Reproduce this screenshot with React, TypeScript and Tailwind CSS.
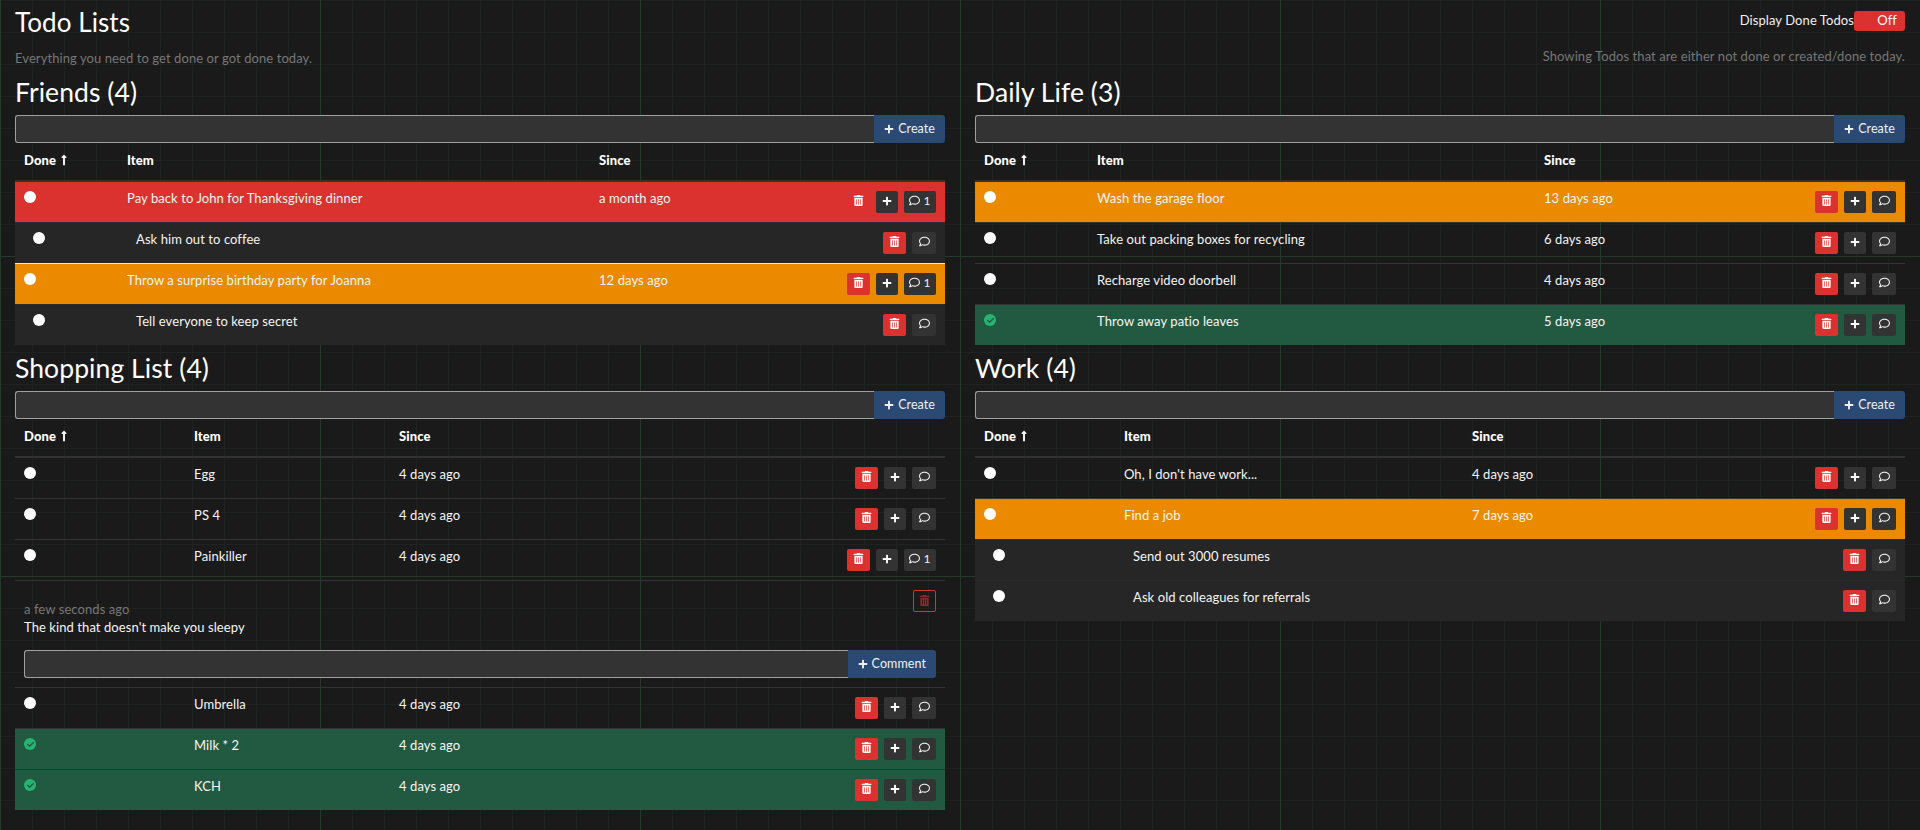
import React from 'react';
import {FaTrashAlt, FaPlus, FaRegComment, FaLongArrowAltUp, FaCheck} from 'react-icons/fa';

type Tone = 'plain' | 'red' | 'orange' | 'green' | 'sub';

interface Todo {
    title: string;
    since?: string;
    tone?: Tone;
    done?: boolean;
    comments?: number;
    sub?: boolean;
    lightTop?: boolean;
}

const toneClass: Record<Tone, string> = {
    plain: 'border-[#333333]',
    red: 'bg-[#dc322f] border-[#333333]',
    orange: 'bg-[#eb8a00] border-[#333333]',
    green: 'bg-[#225a41] border-[#333333]',
    sub: 'bg-[#262626] border-[#2c2c2c]',
};

const IconButton: React.FC<{ className: string; children: React.ReactNode }> = ({className, children}) => (
    <span className={`h-[22px] pb-[3px] flex items-center justify-center rounded-[2px] ${className}`}>{children}</span>
);

const RowActions: React.FC<{ todo: Todo }> = ({todo}) => (
    <div className="flex items-center gap-[6px]">
        <IconButton className="w-[23px] bg-[#dc322f] text-white"><FaTrashAlt size={11}/></IconButton>
        {!todo.sub && <IconButton className="w-[22px] bg-[#333333] text-white"><FaPlus size={10}/></IconButton>}
        <IconButton className={`${todo.comments ? 'w-[32px]' : 'w-[24px]'} gap-[3px] bg-[#333333] text-[#f0f0f0]`}>
            <FaRegComment size={11}/>
            {todo.comments ? <span className="text-[12px]">{todo.comments}</span> : null}
        </IconButton>
    </div>
);

const Row: React.FC<{ todo: Todo; cols: string; subCols: string }> = ({todo, cols, subCols}) => {
    const tone = todo.tone ?? 'plain';
    return (
        <div
            className={`h-[41px] border-t grid items-start ${todo.sub ? subCols : cols} ${toneClass[tone]} ${todo.lightTop ? 'border-t-[#e8e8e8]' : ''}`}>
            <div className={`pt-[9px] ${todo.sub ? 'pl-[18px]' : 'pl-[9px]'}`}>
                {todo.done
                    ? <span className="w-[12px] h-[12px] rounded-full bg-[#27b374] flex items-center justify-center text-[#225a41]"><FaCheck size={7}/></span>
                    : <span className="block w-[12px] h-[12px] rounded-full bg-white"/>}
            </div>
            <div className="pt-[6px] text-[13px] leading-5 text-[#f5f5f5]">{todo.title}</div>
            <div className="pt-[6px] text-[13px] leading-5 text-[#f5f5f5]">{todo.since}</div>
            <div className="h-full pr-[9px] flex justify-end items-center">
                <RowActions todo={todo}/>
            </div>
        </div>
    );
};

const AddInput: React.FC<{ label: string }> = ({label}) => (
    <div className="flex h-[28px]">
        <div className="flex-1 bg-[#333333] border border-[#a0a0a0] rounded-l-[3px] border-r-0"/>
        <button className="h-[28px] px-[10px] bg-[#2a4a73] rounded-r-[3px] text-[#f0f0f0] text-[12.5px] flex items-center gap-[4px]">
            <FaPlus size={10}/> {label}
        </button>
    </div>
);

const TodoList: React.FC<{
    title: string;
    cols: string;
    subCols: string;
    todos: Todo[];
    className?: string;
}> = ({title, cols, subCols, todos, className}) => (
    <section className={className}>
        <h2 className="text-[26.5px] leading-[30px] text-white h-[30px] mb-[8px]">{title}</h2>
        <AddInput label="Create"/>
        <div className={`grid h-[37px] items-start pt-[7px] text-[13px] leading-5 font-black text-white ${cols}`}>
            <div className="pl-[9px] flex items-center gap-[2px]">Done <FaLongArrowAltUp size={12}/></div>
            <div>Item</div>
            <div>Since</div>
            <div/>
        </div>
        <div className="border-t border-[#333333]">
            {todos.map((todo) => (
                <React.Fragment key={todo.title}>
                    <Row todo={todo} cols={cols} subCols={subCols}/>
                    {todo.title === 'Painkiller' && (
                        <div className="h-[107px] border-t border-[#333333] px-[9px] pt-[20px]">
                            <div className="flex justify-between items-start">
                                <div>
                                    <div className="text-[13px] leading-[16px] text-[#777777]">a few seconds ago</div>
                                    <div className="text-[13px] leading-[20px] text-[#f5f5f5]">The kind that doesn't make you sleepy</div>
                                </div>
                                <span className="w-[23px] h-[22px] -mt-[11px] pb-[2px] border border-[#dc322f] rounded-[2px] flex items-center justify-center text-[#8e2a28]">
                                    <FaTrashAlt size={11}/>
                                </span>
                            </div>
                            <div className="mt-[13px]">
                                <AddInput label="Comment"/>
                            </div>
                        </div>
                    )}
                </React.Fragment>
            ))}
        </div>
    </section>
);

export default function App() {
    return (
        <div
            className="h-[830px] overflow-hidden bg-[#1a1a1a] text-white font-['Lato','Liberation_Sans',sans-serif] tracking-[0.08px] bg-[linear-gradient(to_right,#26382c_1px,transparent_1px),linear-gradient(to_bottom,#26382c_1px,transparent_1px),linear-gradient(to_right,#1e2321_1px,transparent_1px),linear-gradient(to_bottom,#1e2321_1px,transparent_1px)] bg-[size:320px_320px,320px_320px,32px_32px,32px_32px] bg-[position:0_256px,0_256px,0_0,0_0]">
            <div className="grid grid-cols-2 gap-[30px] px-[15px]">
                <div>
                    <div className="h-[77px] pt-[6px]">
                        <h1 className="text-[26px] leading-[32px] text-white">Todo Lists</h1>
                        <p className="mt-[10px] text-[13px] leading-5 text-[#777777]">Everything you need to get done or got done today.</p>
                    </div>
                    <TodoList
                        title="Friends (4)"
                        cols="grid-cols-[112px_472px_1fr_200px]"
                        subCols="grid-cols-[121px_472px_1fr_200px]"
                        todos={[
                            {title: 'Pay back to John for Thanksgiving dinner', since: 'a month ago', tone: 'red', comments: 1},
                            {title: 'Ask him out to coffee', tone: 'sub', sub: true},
                            {title: 'Throw a surprise birthday party for Joanna', since: '12 days ago', tone: 'orange', comments: 1, lightTop: true},
                            {title: 'Tell everyone to keep secret', tone: 'sub', sub: true},
                        ]}
                    />
                    <TodoList
                        title="Shopping List (4)"
                        className="mt-[8px]"
                        cols="grid-cols-[179px_205px_1fr_200px]"
                        subCols="grid-cols-[179px_205px_1fr_200px]"
                        todos={[
                            {title: 'Egg', since: '4 days ago'},
                            {title: 'PS 4', since: '4 days ago'},
                            {title: 'Painkiller', since: '4 days ago', comments: 1},
                            {title: 'Umbrella', since: '4 days ago'},
                            {title: 'Milk * 2', since: '4 days ago', tone: 'green', done: true},
                            {title: 'KCH', since: '4 days ago', tone: 'green', done: true},
                        ]}
                    />
                </div>
                <div>
                    <div className="h-[77px] pt-[11px]">
                        <div className="flex justify-end items-center text-[13px] h-[20px] text-[#f0f0f0]">
                            Display Done Todos
                            <span className="w-[51px] h-[20px] bg-[#dc322f] rounded-[3px] flex items-center justify-end pr-[8px] text-white">Off</span>
                        </div>
                        <p className="mt-[15px] text-right text-[13px] leading-5 text-[#777777]">Showing Todos that are either not done or created/done today.</p>
                    </div>
                    <TodoList
                        title="Daily Life (3)"
                        cols="grid-cols-[122px_447px_1fr_200px]"
                        subCols="grid-cols-[122px_447px_1fr_200px]"
                        todos={[
                            {title: 'Wash the garage floor', since: '13 days ago', tone: 'orange'},
                            {title: 'Take out packing boxes for recycling', since: '6 days ago'},
                            {title: 'Recharge video doorbell', since: '4 days ago'},
                            {title: 'Throw away patio leaves', since: '5 days ago', tone: 'green', done: true},
                        ]}
                    />
                    <TodoList
                        title="Work (4)"
                        className="mt-[8px]"
                        cols="grid-cols-[149px_348px_1fr_200px]"
                        subCols="grid-cols-[158px_348px_1fr_200px]"
                        todos={[
                            {title: "Oh, I don't have work...", since: '4 days ago'},
                            {title: 'Find a job', since: '7 days ago', tone: 'orange'},
                            {title: 'Send out 3000 resumes', tone: 'sub', sub: true},
                            {title: 'Ask old colleagues for referrals', tone: 'sub', sub: true},
                        ]}
                    />
                </div>
            </div>
        </div>
    );
}
